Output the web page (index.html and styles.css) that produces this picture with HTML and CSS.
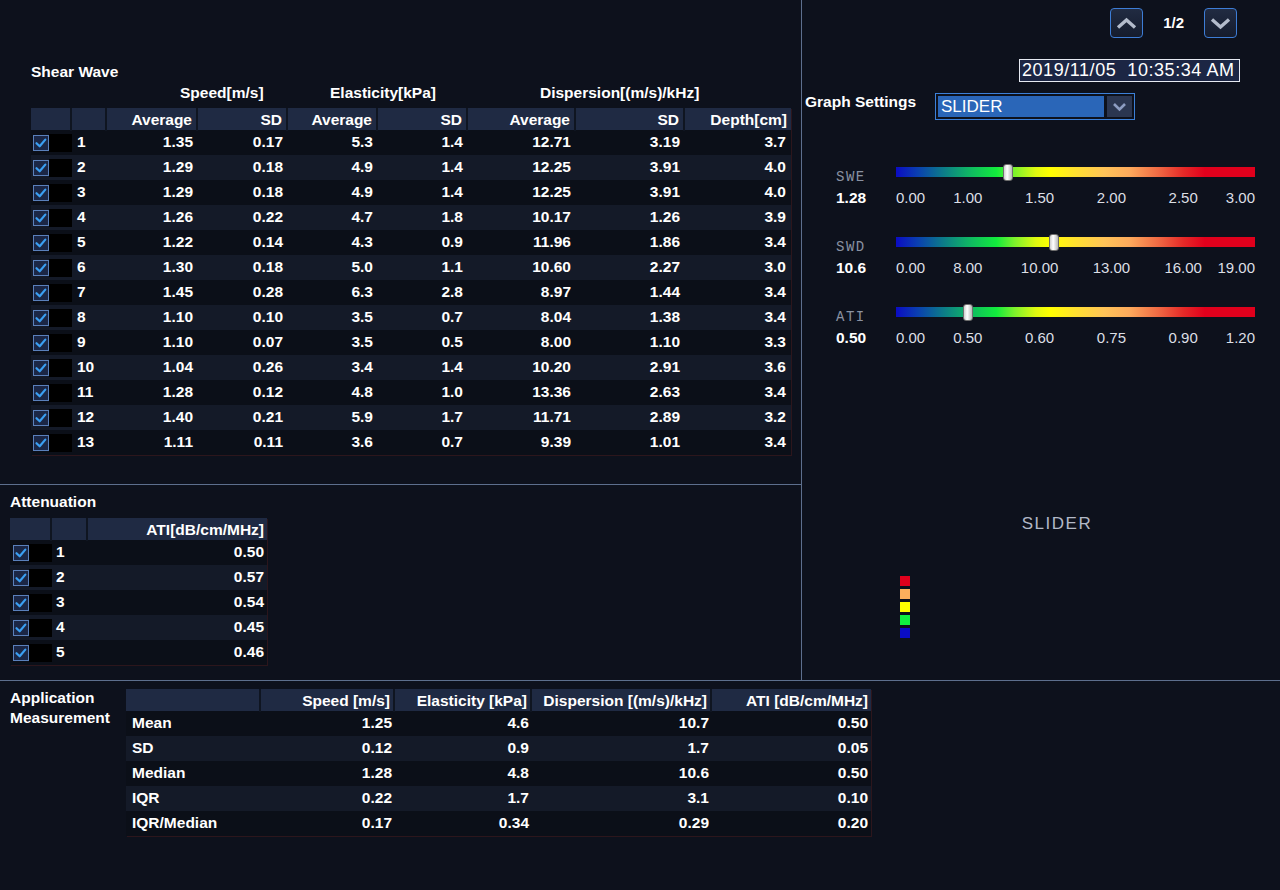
FILE: index.html
```html
<!DOCTYPE html>
<html>
<head>
<meta charset="utf-8">
<title>Shear Wave Report</title>
<link rel="stylesheet" href="styles.css">
</head>
<body>
<div class="top">
  <div class="left">
    <section class="shear">
      <div class="title">Shear Wave</div>
      <div class="groups">
        <span class="g-speed">Speed[m/s]</span>
        <span class="g-elast">Elasticity[kPa]</span>
        <span class="g-disp">Dispersion[(m/s)/kHz]</span>
      </div>
      <div class="tbl sw">
        <div class="head"><div></div><div></div><div>Average</div><div>SD</div><div>Average</div><div>SD</div><div>Average</div><div>SD</div><div>Depth[cm]</div></div>
        <div class="r"><div class="ck"><svg class="cb" viewBox="0 0 16 16"><rect x="0.5" y="0.5" width="15" height="15"/><path d="M3.5 8.2 L6.7 11.3 L12.3 4.6"/></svg><span class="blk"></span></div><div class="n">1</div><div>1.35</div><div>0.17</div><div>5.3</div><div>1.4</div><div>12.71</div><div>3.19</div><div>3.7</div></div>
        <div class="r"><div class="ck"><svg class="cb" viewBox="0 0 16 16"><rect x="0.5" y="0.5" width="15" height="15"/><path d="M3.5 8.2 L6.7 11.3 L12.3 4.6"/></svg><span class="blk"></span></div><div class="n">2</div><div>1.29</div><div>0.18</div><div>4.9</div><div>1.4</div><div>12.25</div><div>3.91</div><div>4.0</div></div>
        <div class="r"><div class="ck"><svg class="cb" viewBox="0 0 16 16"><rect x="0.5" y="0.5" width="15" height="15"/><path d="M3.5 8.2 L6.7 11.3 L12.3 4.6"/></svg><span class="blk"></span></div><div class="n">3</div><div>1.29</div><div>0.18</div><div>4.9</div><div>1.4</div><div>12.25</div><div>3.91</div><div>4.0</div></div>
        <div class="r"><div class="ck"><svg class="cb" viewBox="0 0 16 16"><rect x="0.5" y="0.5" width="15" height="15"/><path d="M3.5 8.2 L6.7 11.3 L12.3 4.6"/></svg><span class="blk"></span></div><div class="n">4</div><div>1.26</div><div>0.22</div><div>4.7</div><div>1.8</div><div>10.17</div><div>1.26</div><div>3.9</div></div>
        <div class="r"><div class="ck"><svg class="cb" viewBox="0 0 16 16"><rect x="0.5" y="0.5" width="15" height="15"/><path d="M3.5 8.2 L6.7 11.3 L12.3 4.6"/></svg><span class="blk"></span></div><div class="n">5</div><div>1.22</div><div>0.14</div><div>4.3</div><div>0.9</div><div>11.96</div><div>1.86</div><div>3.4</div></div>
        <div class="r"><div class="ck"><svg class="cb" viewBox="0 0 16 16"><rect x="0.5" y="0.5" width="15" height="15"/><path d="M3.5 8.2 L6.7 11.3 L12.3 4.6"/></svg><span class="blk"></span></div><div class="n">6</div><div>1.30</div><div>0.18</div><div>5.0</div><div>1.1</div><div>10.60</div><div>2.27</div><div>3.0</div></div>
        <div class="r"><div class="ck"><svg class="cb" viewBox="0 0 16 16"><rect x="0.5" y="0.5" width="15" height="15"/><path d="M3.5 8.2 L6.7 11.3 L12.3 4.6"/></svg><span class="blk"></span></div><div class="n">7</div><div>1.45</div><div>0.28</div><div>6.3</div><div>2.8</div><div>8.97</div><div>1.44</div><div>3.4</div></div>
        <div class="r"><div class="ck"><svg class="cb" viewBox="0 0 16 16"><rect x="0.5" y="0.5" width="15" height="15"/><path d="M3.5 8.2 L6.7 11.3 L12.3 4.6"/></svg><span class="blk"></span></div><div class="n">8</div><div>1.10</div><div>0.10</div><div>3.5</div><div>0.7</div><div>8.04</div><div>1.38</div><div>3.4</div></div>
        <div class="r"><div class="ck"><svg class="cb" viewBox="0 0 16 16"><rect x="0.5" y="0.5" width="15" height="15"/><path d="M3.5 8.2 L6.7 11.3 L12.3 4.6"/></svg><span class="blk"></span></div><div class="n">9</div><div>1.10</div><div>0.07</div><div>3.5</div><div>0.5</div><div>8.00</div><div>1.10</div><div>3.3</div></div>
        <div class="r"><div class="ck"><svg class="cb" viewBox="0 0 16 16"><rect x="0.5" y="0.5" width="15" height="15"/><path d="M3.5 8.2 L6.7 11.3 L12.3 4.6"/></svg><span class="blk"></span></div><div class="n">10</div><div>1.04</div><div>0.26</div><div>3.4</div><div>1.4</div><div>10.20</div><div>2.91</div><div>3.6</div></div>
        <div class="r"><div class="ck"><svg class="cb" viewBox="0 0 16 16"><rect x="0.5" y="0.5" width="15" height="15"/><path d="M3.5 8.2 L6.7 11.3 L12.3 4.6"/></svg><span class="blk"></span></div><div class="n">11</div><div>1.28</div><div>0.12</div><div>4.8</div><div>1.0</div><div>13.36</div><div>2.63</div><div>3.4</div></div>
        <div class="r"><div class="ck"><svg class="cb" viewBox="0 0 16 16"><rect x="0.5" y="0.5" width="15" height="15"/><path d="M3.5 8.2 L6.7 11.3 L12.3 4.6"/></svg><span class="blk"></span></div><div class="n">12</div><div>1.40</div><div>0.21</div><div>5.9</div><div>1.7</div><div>11.71</div><div>2.89</div><div>3.2</div></div>
        <div class="r"><div class="ck"><svg class="cb" viewBox="0 0 16 16"><rect x="0.5" y="0.5" width="15" height="15"/><path d="M3.5 8.2 L6.7 11.3 L12.3 4.6"/></svg><span class="blk"></span></div><div class="n">13</div><div>1.11</div><div>0.11</div><div>3.6</div><div>0.7</div><div>9.39</div><div>1.01</div><div>3.4</div></div>
      </div>
    </section>
    <section class="atten">
      <div class="title">Attenuation</div>
      <div class="tbl at">
        <div class="head"><div></div><div></div><div>ATI[dB/cm/MHz]</div></div>
        <div class="r"><div class="ck"><svg class="cb" viewBox="0 0 16 16"><rect x="0.5" y="0.5" width="15" height="15"/><path d="M3.5 8.2 L6.7 11.3 L12.3 4.6"/></svg><span class="blk"></span></div><div class="n">1</div><div>0.50</div></div>
        <div class="r"><div class="ck"><svg class="cb" viewBox="0 0 16 16"><rect x="0.5" y="0.5" width="15" height="15"/><path d="M3.5 8.2 L6.7 11.3 L12.3 4.6"/></svg><span class="blk"></span></div><div class="n">2</div><div>0.57</div></div>
        <div class="r"><div class="ck"><svg class="cb" viewBox="0 0 16 16"><rect x="0.5" y="0.5" width="15" height="15"/><path d="M3.5 8.2 L6.7 11.3 L12.3 4.6"/></svg><span class="blk"></span></div><div class="n">3</div><div>0.54</div></div>
        <div class="r"><div class="ck"><svg class="cb" viewBox="0 0 16 16"><rect x="0.5" y="0.5" width="15" height="15"/><path d="M3.5 8.2 L6.7 11.3 L12.3 4.6"/></svg><span class="blk"></span></div><div class="n">4</div><div>0.45</div></div>
        <div class="r"><div class="ck"><svg class="cb" viewBox="0 0 16 16"><rect x="0.5" y="0.5" width="15" height="15"/><path d="M3.5 8.2 L6.7 11.3 L12.3 4.6"/></svg><span class="blk"></span></div><div class="n">5</div><div>0.46</div></div>
      </div>
    </section>
  </div>
  <div class="right">
    <div class="nav">
      <div class="nbtn"><svg viewBox="0 0 31 28"><path d="M7 18.5 L15.5 11 L24 18.5"/></svg></div>
      <span class="page">1/2</span>
      <div class="nbtn"><svg viewBox="0 0 31 28"><path d="M7 10.5 L15.5 18 L24 10.5"/></svg></div>
    </div>
    <div class="date-row"><div class="date">2019/11/05  10:35:34 AM</div></div>
    <div class="graph">
      <span class="glabel">Graph Settings</span>
      <div class="dd">
        <span class="dd-val">SLIDER</span>
        <span class="dd-btn"><svg viewBox="0 0 25 21"><path d="M7 8 L12.5 13.5 L18 8"/></svg></span>
      </div>
    </div>
    <div class="sliders">
      <div class="slider">
        <span class="lbl">SWE</span>
        <div class="bar"><span class="thumb" style="left:31.2%"></span></div>
        <span class="val">1.28</span>
        <div class="ticks"><span class="t0">0.00</span><span class="t1">1.00</span><span class="t2">1.50</span><span class="t3">2.00</span><span class="t4">2.50</span><span class="t5">3.00</span></div>
      </div>
      <div class="slider">
        <span class="lbl">SWD</span>
        <div class="bar"><span class="thumb" style="left:44%"></span></div>
        <span class="val">10.6</span>
        <div class="ticks"><span class="t0">0.00</span><span class="t1">8.00</span><span class="t2">10.00</span><span class="t3">13.00</span><span class="t4">16.00</span><span class="t5">19.00</span></div>
      </div>
      <div class="slider">
        <span class="lbl">ATI</span>
        <div class="bar"><span class="thumb" style="left:20%"></span></div>
        <span class="val">0.50</span>
        <div class="ticks"><span class="t0">0.00</span><span class="t1">0.50</span><span class="t2">0.60</span><span class="t3">0.75</span><span class="t4">0.90</span><span class="t5">1.20</span></div>
      </div>
    </div>
    <div class="caption">SLIDER</div>
    <div class="legend">
      <span class="sq red"></span>
      <span class="sq orange"></span>
      <span class="sq yellow"></span>
      <span class="sq green"></span>
      <span class="sq blue"></span>
    </div>
  </div>
</div>
<section class="app">
  <div class="app-label">Application<br>Measurement</div>
  <div class="tbl am">
    <div class="head"><div></div><div>Speed [m/s]</div><div>Elasticity [kPa]</div><div>Dispersion [(m/s)/kHz]</div><div>ATI [dB/cm/MHz]</div></div>
    <div class="r"><div class="lab">Mean</div><div>1.25</div><div>4.6</div><div>10.7</div><div>0.50</div></div>
    <div class="r"><div class="lab">SD</div><div>0.12</div><div>0.9</div><div>1.7</div><div>0.05</div></div>
    <div class="r"><div class="lab">Median</div><div>1.28</div><div>4.8</div><div>10.6</div><div>0.50</div></div>
    <div class="r"><div class="lab">IQR</div><div>0.22</div><div>1.7</div><div>3.1</div><div>0.10</div></div>
    <div class="r"><div class="lab">IQR/Median</div><div>0.17</div><div>0.34</div><div>0.29</div><div>0.20</div></div>
  </div>
</section>
</body>
</html>
```

FILE: styles.css
```css
* { box-sizing: border-box; margin: 0; padding: 0; }
html, body { background: #0d111c; }
body {
  width: 1280px;
  height: 890px;
  overflow: hidden;
  font-family: "Liberation Sans", Arial, sans-serif;
  font-weight: bold;
  font-size: 15.5px;
  color: #ffffff;
}

/* ---------- frame ---------- */
.top {
  display: flex;
  height: 681px;
  border-bottom: 1px solid #5d6f8d;
}
.left {
  width: 802px;
  flex: none;
  border-right: 1px solid #5d6f8d;
  display: flex;
  flex-direction: column;
}
.right { flex: 1; }

.title { line-height: 18px; height: 18px; }

/* ---------- tables ---------- */
.tbl { box-shadow: 1px 1px 0 #2c161c; }
.tbl .head, .tbl .r { display: grid; }
.tbl .head {
  height: 22px;
  line-height: 23px;
  background: #1f2a43;
}
.tbl .head > div {
  text-align: right;
  padding-right: 4px;
  border-right: 2px solid #0f1521;
  white-space: nowrap;
}
.tbl .head > div:last-child { border-right: none; }
.tbl .r {
  height: 25px;
  line-height: 24px;
  background: #0b0f18;
}
.tbl .r:nth-child(odd) { background: #141a28; }
.tbl .r > div {
  text-align: right;
  padding-right: 5px;
  white-space: nowrap;
}
.tbl .r > div.n { text-align: left; padding-left: 5px; padding-right: 0; }
.tbl .r > div.ck {
  display: flex;
  align-items: center;
  padding: 0 0 0 2px;
}
.cb { width: 16px; height: 16px; flex: none; }
.cb rect { fill: #1b2746; stroke: #5a80bb; stroke-width: 1; }
.cb path { fill: none; stroke: #3a9ff2; stroke-width: 2.2; stroke-linecap: round; stroke-linejoin: round; }
.blk { flex: 1; height: 18px; background: #000000; }

/* shear wave */
.shear {
  height: 485px;
  border-bottom: 1px solid #5d6f8d;
  padding: 63px 0 0 31px;
}
.sw .head, .sw .r, .groups {
  grid-template-columns: 41px 35px 91px 90px 90px 90px 108px 109px 106px;
}
.sw { width: 760px; }
.groups {
  display: grid;
  width: 760px;
  margin-top: 2px;
  height: 25px;
  line-height: 20px;
  white-space: nowrap;
}
.g-speed { grid-column: 3 / 5; padding-left: 73px; }
.g-elast { grid-column: 5 / 7; padding-left: 42px; }
.g-disp { grid-column: 7 / 10; padding-left: 72px; }

/* attenuation */
.atten { padding: 8px 0 0 10px; }
.at { width: 257px; margin-top: 7px; }
.at .head, .at .r { grid-template-columns: 42px 36px 179px; }
.at .r > div.ck { padding-left: 3px; }
.at .r > div.n { padding-left: 4px; }
.at .head > div:last-child { padding-right: 3px; }
.at .r > div:last-child { padding-right: 3px; }

/* application measurement */
.app {
  display: flex;
  padding: 8px 0 0 10px;
}
.app-label {
  width: 116px;
  flex: none;
  line-height: 20px;
  margin-top: -1px;
}
.am { width: 745px; }
.am .head, .am .r { grid-template-columns: 135px 134px 137px 180px 159px; }
.am .head > div { padding-right: 3px; }
.am .r > div { padding-right: 3px; }
.am .r > div.lab { text-align: left; padding-left: 6px; }

/* ---------- right panel ---------- */
.nav {
  display: flex;
  justify-content: flex-end;
  align-items: center;
  gap: 20px;
  padding: 8px 43px 0 0;
}
.nbtn {
  width: 33px;
  height: 30px;
  border: 1px solid #3d7dd6;
  border-radius: 4px;
  background: linear-gradient(#212b42, #151c2d);
}
.nbtn svg { display: block; width: 31px; height: 28px; }
.nbtn path { fill: none; stroke: #b3bbcb; stroke-width: 3.4; stroke-linejoin: miter; }
.page { font-size: 15px; line-height: 30px; }

.date-row {
  display: flex;
  justify-content: flex-end;
  margin-top: 21px;
  padding-right: 40px;
}
.date {
  width: 221px;
  height: 23px;
  border: 1px solid #e6eaf2;
  background: #1c2644;
  font-weight: normal;
  font-size: 18px;
  line-height: 21px;
  letter-spacing: 0.55px;
  padding-left: 2px;
  white-space: pre;
}

.graph {
  display: flex;
  align-items: flex-start;
  margin-top: 11px;
  padding-left: 3px;
}
.glabel { width: 130px; line-height: 18px; }
.dd {
  width: 200px;
  height: 27px;
  border: 1px solid #3c80d8;
  padding: 2px;
  display: flex;
  gap: 3px;
}
.dd-val {
  width: 167px;
  background: #2a66b8;
  font-weight: normal;
  font-size: 17px;
  line-height: 21px;
  padding-left: 3px;
}
.dd-btn { width: 25px; background: #2b3650; }
.dd-btn svg { display: block; width: 25px; height: 21px; }
.dd-btn path { fill: none; stroke: #8d9dc2; stroke-width: 2.6; }

.sliders { margin-top: 47px; padding-left: 34px; }
.slider {
  display: grid;
  grid-template-columns: 60px 359px;
  grid-template-rows: 21px 20px;
}
.slider + .slider { margin-top: 29px; }
.lbl {
  font-family: "Liberation Mono", "Courier New", monospace;
  font-weight: normal;
  font-size: 14px;
  line-height: 14px;
  letter-spacing: 1.5px;
  color: #8a92a2;
  margin-top: 3px;
}
.bar {
  position: relative;
  height: 10px;
  background: linear-gradient(to right,
    #0b0cc4 0%, #0a3fb0 6%, #0c7a8a 13%, #0fb466 20%, #12ec3c 28%,
    #7cf22c 33%, #e0fa10 39%, #ffff00 43%, #ffe030 50%, #ffc458 58%,
    #fcaa5c 65%, #f06a44 73%, #e42a28 80%, #e0001c 86%, #e0001c 100%);
}
.thumb {
  position: absolute;
  top: -3px;
  width: 10px;
  height: 17px;
  margin-left: -5px;
  border-radius: 3px;
  border: 1px solid #6e6e6e;
  background: linear-gradient(to right, #cfcfcf, #ffffff 40%, #b9b9b9);
}
.val { line-height: 20px; }
.ticks {
  display: grid;
  grid-template-columns: repeat(10, 1fr);
  font-weight: normal;
  font-size: 15px;
  line-height: 20px;
  color: #dcdfe5;
  white-space: nowrap;
}
.ticks span { grid-row: 1; }
.t0 { grid-column: 1 / 3; text-align: left; }
.t1 { grid-column: 2 / 4; text-align: center; }
.t2 { grid-column: 4 / 6; text-align: center; }
.t3 { grid-column: 6 / 8; text-align: center; }
.t4 { grid-column: 8 / 10; text-align: center; }
.t5 { grid-column: 9 / 11; text-align: right; }

.caption {
  margin-top: 166px;
  padding-left: 32px;
  text-align: center;
  font-weight: normal;
  font-size: 17px;
  line-height: 20px;
  letter-spacing: 1.5px;
  color: #b3b9c7;
}
.legend {
  margin-top: 42px;
  padding-left: 98px;
  display: flex;
  flex-direction: column;
  gap: 3px;
}
.sq { width: 10px; height: 10px; display: block; }
.red { background: #e0001c; }
.orange { background: #fcae5c; }
.yellow { background: #ffff00; }
.green { background: #10f040; }
.blue { background: #0a0cc4; }
```
